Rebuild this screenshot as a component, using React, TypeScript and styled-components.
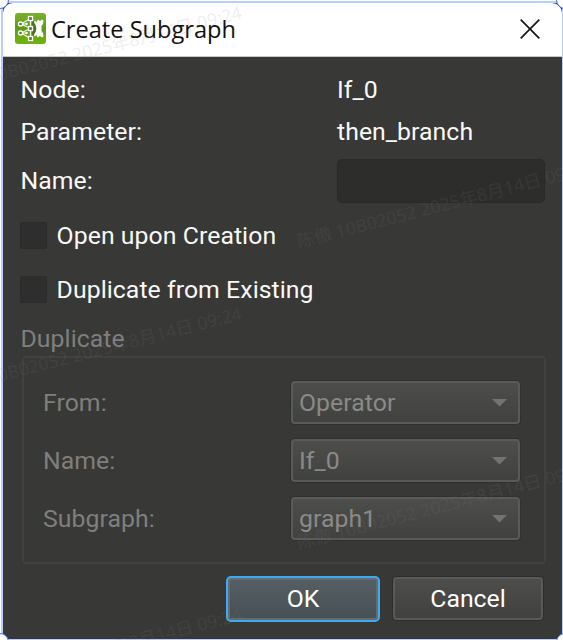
import React from "react";
import styled, { createGlobalStyle } from "styled-components";

const GlobalStyle = createGlobalStyle`
  * { box-sizing: border-box; }
  html, body, #root { margin: 0; height: 100%; overflow: hidden; background: #fff; }
`;

const Selection = styled.div`
  position: relative;
  width: 563px;
  height: 640px;
  padding: 3px 1px 1px 3px;
  overflow: hidden;
  background: linear-gradient(#fff 1px, #b9ceff 1px);
  box-shadow: inset 1px 0 #fff;
  font-family: Roboto, "Noto Sans CJK SC", sans-serif;
  font-size: 24.8px;
  line-height: 28px;
  color: #f8f8f8;
`;

const Backdrop = styled.div`
  height: 636px;
  background: #34343c;
`;

const Dialog = styled.div`
  height: 636px;
  border-radius: 10px 10px 4px 4px;
  background: #383836;
  overflow: hidden;
`;

const TitleBar = styled.header`
  display: flex;
  align-items: center;
  height: 54px;
  padding: 0 22px 2px 12px;
  background: #fff;
  border-bottom: 1px solid #c3cbbf;
  color: #101010;
`;

const Title = styled.h1`
  flex: 1;
  margin: 0 0 0 5px;
  font: 400 23.6px/30px "Open Sans", "Noto Sans", sans-serif;
  white-space: nowrap;
`;

const Body = styled.main`
  display: flex;
  flex-direction: column;
  padding: 19px 16px 0 18px;
  letter-spacing: 0.06px;
`;

const Row = styled.div<{ $height: number; $columns?: string }>`
  display: grid;
  grid-template-columns: ${(p) => p.$columns ?? "316px 208px"};
  align-items: center;
  height: ${(p) => p.$height}px;
  white-space: nowrap;
`;

const Label = styled.span`
  margin-left: -0.5px;
`;

const NameInput = styled.input`
  width: 208px;
  height: 44px;
  border: 1px solid #292929;
  border-radius: 5px;
  background: #2d2d2c;
  color: #f4f4f4;
  font: inherit;
  padding: 0 8px;
  outline: none;
`;

const Checks = styled.div`
  margin-top: 5.5px;
`;

const CheckRow = styled.label`
  display: flex;
  align-items: center;
  gap: 9.6px;
  height: 54px;
`;

const CheckBox = styled.span`
  width: 27px;
  height: 27px;
  margin-left: -1px;
  border: 1px solid #2c2c2c;
  border-radius: 2px;
  background: #2e2e2e;
`;

const GroupTitle = styled.div`
  height: 28px;
  margin: 8.5px 0 0 -0.5px;
  color: #7f7f7d;
`;

const Group = styled.section`
  display: flex;
  flex-direction: column;
  gap: 15px;
  height: 208px;
  margin: 3px 0 0 1px;
  padding: 23px 23px 0 19px;
  border: 2px solid #41413f;
  border-radius: 4px;
  color: #7f7f7d;
`;

const Combo = styled.div`
  display: flex;
  align-items: center;
  justify-content: space-between;
  height: 43px;
  padding: 0 11px 0 6px;
  border: 2px solid #5a5a59;
  border-radius: 4px;
  background: linear-gradient(#4d4d4b, #41413f);
  box-shadow: 0 0 0 1px #30302f;
  color: #8a8a88;
`;

const Actions = styled.footer`
  display: flex;
  justify-content: flex-end;
  gap: 13px;
  margin-top: 12px;
  padding-right: 3px;
`;

const Button = styled.button<{ $primary?: boolean }>`
  width: ${(p) => (p.$primary ? 154 : 150)}px;
  height: ${(p) => (p.$primary ? 46 : 43)}px;
  margin-top: ${(p) => (p.$primary ? 0 : 1)}px;
  padding: 0;
  border: 2px solid ${(p) => (p.$primary ? "#3daaf5" : "#5a5a59")};
  border-radius: ${(p) => (p.$primary ? 5 : 4)}px;
  background: ${(p) => (p.$primary ? "linear-gradient(#566064, #465054)" : "linear-gradient(#4d4d4b, #41413f)")};
  box-shadow: ${(p) => (p.$primary ? "inset 0 0 0 2px #666b6d" : "0 0 0 1px #2c2c2b")};
  color: #fff;
  font: inherit;
`;

const Watermark = styled.div<{ $x: number; $y: number }>`
  position: absolute;
  left: ${(p) => p.$x}px;
  top: ${(p) => p.$y}px;
  transform: rotate(-14.4deg);
  transform-origin: 0 100%;
  font: 400 17.75px/24px "Noto Sans", "Noto Sans CJK SC", sans-serif;
  color: rgba(128, 128, 128, 0.15);
  white-space: nowrap;
  pointer-events: none;
`;

const Handle = styled.i<{ $x: number; $y: number }>`
  position: absolute;
  left: ${(p) => p.$x - 9}px;
  top: ${(p) => p.$y - 9}px;
  width: 18px;
  height: 18px;
  border: 1px solid #3f74e8;
  border-radius: 50%;
  background: #fff;
`;

const AppIcon = () => (
  <svg width="31" height="31" viewBox="0 0 31 31">
    <defs>
      <linearGradient id="leaf" x2="0" y2="1">
        <stop stopColor="#7cb02c" />
        <stop offset="0.5" stopColor="#5f9a17" />
        <stop offset="1" stopColor="#72b40c" />
      </linearGradient>
    </defs>
    <rect width="31" height="31" rx="3" fill="url(#leaf)" />
    <path d="M17 7 C23 10 23 21 17 24Z" fill="#4c7420" />
    <path
      d="M19.5 7.5 L21.5 9 L23 6.5 L25 8 L27 6.5 L28.5 7.5 L28 11 L26.5 13 V18 L28 20 L28.5 23.5 L27 24.5 L25 23 L22.5 24.5 L21.5 22 L19.5 23.5 L19 21.5 C22 18 22 13 19 9.5Z"
      fill="#fff"
    />
    <g fill="none" stroke="#f0f6e6" strokeWidth="1.2">
      <path d="M6 11 L15.5 5.5 M6 11 L15.5 15.5 M6 20 L15.5 15.5 M6 20 L15.5 25.5 M6 11 H11 M6 20 H11 M15.5 5.5 V25.5" />
    </g>
    <g fill="#55742c" stroke="#fff" strokeWidth="1.3">
      <rect x="13.5" y="3.5" width="4" height="4" />
      <rect x="13.5" y="13.5" width="4" height="4" />
      <rect x="13.5" y="23.5" width="4" height="4" />
      <circle cx="5.5" cy="11" r="2" />
      <circle cx="5.5" cy="20" r="2" />
    </g>
    <g fill="#fff">
      <circle cx="11.5" cy="11" r="1.3" />
      <circle cx="11.5" cy="20" r="1.3" />
    </g>
  </svg>
);

const CloseIcon = () => (
  <svg width="20" height="20" viewBox="0 0 20 20" stroke="#151515" strokeWidth="1.7">
    <path d="M.7 .7 L19.3 19.3 M19.3 .7 L.7 19.3" />
  </svg>
);

const Arrow = () => (
  <svg width="15" height="8" viewBox="0 0 15 8">
    <path d="M0 0 H15 L7.5 7.5Z" fill="#73736f" />
  </svg>
);

const options = [
  ["From:", "Operator"],
  ["Name:", "If_0"],
  ["Subgraph:", "graph1"],
];

const stamps = [
  [-48, 74],
  [-48, 375],
  [-48, 676],
  [300, 229],
  [300, 530],
];

export default function App() {
  return (
    <Selection>
      <GlobalStyle />
      <Backdrop>
        <Dialog>
          <TitleBar>
            <AppIcon />
            <Title>Create Subgraph</Title>
            <CloseIcon />
          </TitleBar>
          <Body>
            <Row $height={28}>
              <Label>Node:</Label>
              <span>If_0</span>
            </Row>
            <Row $height={55}>
              <Label>Parameter:</Label>
              <span>then_branch</span>
            </Row>
            <Row $height={44}>
              <Label>Name:</Label>
              <NameInput aria-label="Name" />
            </Row>
            <Checks>
              <CheckRow>
                <CheckBox />
                Open upon Creation
              </CheckRow>
              <CheckRow>
                <CheckBox />
                Duplicate from Existing
              </CheckRow>
            </Checks>
            <GroupTitle>Duplicate</GroupTitle>
            <Group>
              {options.map(([label, value]) => (
                <Row key={label} $height={43} $columns="248px 229px">
                  <span>{label}</span>
                  <Combo>
                    {value}
                    <Arrow />
                  </Combo>
                </Row>
              ))}
            </Group>
            <Actions>
              <Button $primary>OK</Button>
              <Button>Cancel</Button>
            </Actions>
          </Body>
        </Dialog>
      </Backdrop>
      {stamps.map(([x, y]) => (
        <Watermark key={`${x}:${y}`} $x={x} $y={y}>
          陈傲 10B02052 2025年8月14日 09:24
        </Watermark>
      ))}
      <Handle $x={0} $y={0} />
      <Handle $x={565} $y={0} />
      <Handle $x={0} $y={642} />
      <Handle $x={565} $y={642} />
    </Selection>
  );
}
